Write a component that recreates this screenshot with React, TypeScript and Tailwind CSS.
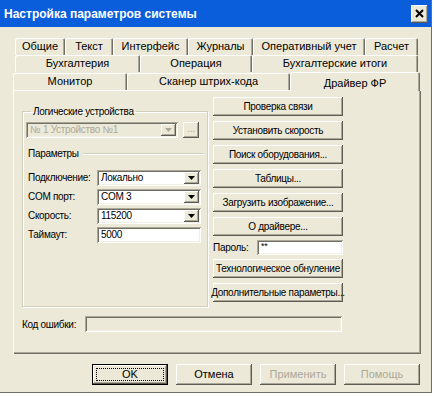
import React from 'react';

const raised =
  'shadow-[inset_-1px_-1px_0_#5e5c52,inset_1px_1px_0_#ffffff,inset_-2px_-2px_0_#aca899]';
const sunken =
  'shadow-[inset_1px_1px_0_#aca899,inset_-1px_-1px_0_#ffffff,inset_2px_2px_0_#716f64,inset_-2px_-2px_0_#f1efe2]';

// Small down arrow used in combo buttons
const Arrow: React.FC<{ disabled?: boolean }> = ({ disabled }) => (
  <svg width="7" height="4" viewBox="0 0 7 4">
    <path d="M0 0h7L3.5 4z" fill={disabled ? '#aca899' : '#000'} />
  </svg>
);

const Btn: React.FC<{ label: string; className?: string; disabled?: boolean }> = ({
  label,
  className = '',
  disabled,
}) => (
  <div
    className={`flex items-center justify-center whitespace-nowrap bg-[#ece9d8] ${raised} ${
      disabled ? 'text-[#aca899]' : 'text-black'
    } ${className}`}
  >
    {label}
  </div>
);

const Combo: React.FC<{ value: string; className?: string; disabled?: boolean }> = ({
  value,
  className = '',
  disabled,
}) => (
  <div
    className={`flex items-center ${sunken} ${
      disabled ? 'bg-[#ece9d8] text-[#aca899]' : 'bg-white text-black'
    } ${className}`}
  >
    <span className="flex-1 pl-[4px] leading-none truncate">{value}</span>
    <div className={`mr-[2px] w-[15px] h-[calc(100%-4px)] flex items-center justify-center bg-[#ece9d8] ${raised}`}>
      <Arrow disabled={disabled} />
    </div>
  </div>
);

const Field: React.FC<{ value?: string; className?: string; disabled?: boolean }> = ({
  value = '',
  className = '',
  disabled,
}) => (
  <div
    className={`flex items-center pl-[4px] ${sunken} ${
      disabled ? 'bg-[#ece9d8]' : 'bg-white'
    } ${className}`}
  >
    <span className="leading-none">{value}</span>
  </div>
);

type Tab = { label: string; w: number };

const row1: Tab[] = [
  { label: 'Общие', w: 50 },
  { label: 'Текст', w: 48 },
  { label: 'Интерфейс', w: 75 },
  { label: 'Журналы', w: 65 },
  { label: 'Оперативный учет', w: 112 },
  { label: 'Расчет', w: 53 },
];
const row2: Tab[] = [
  { label: 'Бухгалтерия', w: 125 },
  { label: 'Операция', w: 112 },
  { label: 'Бухгалтерские итоги', w: 166 },
];
const row3: Tab[] = [
  { label: 'Монитор', w: 114 },
  { label: 'Сканер штрих-кода', w: 163 },
];

const TabRow: React.FC<{ tabs: Tab[]; className?: string }> = ({ tabs, className = '' }) => (
  <div className={`flex h-[17px] ${className}`}>
    {tabs.map((t) => (
      <div
        key={t.label}
        style={{ width: t.w }}
        className="flex items-center justify-center whitespace-nowrap bg-[#ece9d8] rounded-t-[2px] shadow-[inset_1px_1px_0_#ffffff,inset_-1px_0_0_#716f64,inset_-2px_0_0_#aca899]"
      >
        {t.label}
      </div>
    ))}
  </div>
);

const rightButtons = [
  'Проверка связи',
  'Установить скорость',
  'Поиск оборудования...',
  'Таблицы...',
  'Загрузить изображение...',
  'О драйвере...',
];

export default function App() {
  return (
    <div className="w-[434px] h-[396px] bg-white font-['Liberation_Sans',Arial,sans-serif] text-[11px] text-black">
      <div className="w-[432px] h-[393px] bg-[#ece9d8] border-r border-b border-[#716f64] flex flex-col">
        {/* Title bar */}
        <div className="h-[27px] bg-[#0a5ddb] flex items-center justify-between pl-[4px] pr-[3px]">
          <span className="text-white font-bold text-[12px]">
            Настройка параметров системы
          </span>
          <div className={`w-[17px] h-[18px] bg-[#ece9d8] flex items-center justify-center ${raised}`}>
            <svg width="9" height="9" viewBox="0 0 9 9">
              <path d="M1 1l7 7M8 1L1 8" stroke="#000" strokeWidth="2" />
            </svg>
          </div>
        </div>

        {/* Tabs */}
        <div className="mt-[11px] pl-[15px]">
          <TabRow tabs={row1} />
          <TabRow tabs={row2} />
          <div className="flex items-end -ml-[2px]">
            <TabRow tabs={row3} />
            <div className="w-[130px] h-[19px] -mb-[1px] relative z-10 flex items-start justify-center pt-[3px] bg-[#ece9d8] rounded-t-[2px] shadow-[inset_1px_1px_0_#ffffff,inset_-1px_0_0_#716f64,inset_-2px_0_0_#aca899]">
              Драйвер ФР
            </div>
          </div>
        </div>

        {/* Panel */}
        <div className="ml-[13px] w-[408px] h-[264px] text-[10px] tracking-[-0.3px] whitespace-nowrap shadow-[inset_1px_1px_0_#ffffff,inset_-1px_-1px_0_#716f64,inset_-2px_-2px_0_#aca899] pl-[9px] pt-[7px]">
          <div className="flex gap-[5px]">
            <fieldset className="w-[186px] h-[202px] mt-[8px] border border-[#d0d0bf] shadow-[1px_1px_0_#ffffff,inset_1px_1px_0_#ffffff] px-[3px]">
              <legend className="ml-[5px] px-[2px] leading-[13px]">Логические устройства</legend>
              <div className="flex items-center gap-[5px] mt-[4px]">
                <Combo value="№ 1 Устройство №1" disabled className="w-[152px] h-[16px]" />
                <Btn label="..." className="w-[16px] h-[16px] pb-[3px] text-[#aca899]" disabled />
              </div>
              <div className="flex items-center gap-[4px] mt-[8px] pl-[2px]">
                <span>Параметры</span>
                <div className="flex-1 h-[2px] border-t border-[#d0d0bf] border-b-white border-b" />
              </div>
              <div className="mt-[8px] flex flex-col gap-[2px] pl-[2px]">
                {[
                  ['Подключение:', 'Локально'],
                  ['COM порт:', 'COM 3'],
                  ['Скорость:', '115200'],
                ].map(([l, v]) => (
                  <div key={l} className="flex items-center h-[17px]">
                    <span className="w-[69px]">{l}</span>
                    <Combo value={v} className="w-[104px] h-[16px]" />
                  </div>
                ))}
                <div className="flex items-center h-[17px]">
                  <span className="w-[69px]">Таймаут:</span>
                  <Field value="5000" className="w-[104px] h-[16px]" />
                </div>
              </div>
            </fieldset>

            <div className="w-[130px] flex flex-col gap-[5px]">
              {rightButtons.map((b) => (
                <Btn key={b} label={b} className="h-[19px]" />
              ))}
              <div className="flex items-center h-[14px] -my-[1px]">
                <span className="w-[44px]">Пароль:</span>
                <Field value="**" className="flex-1 h-[15px] items-start pt-[2px] text-[9px]" />
              </div>
              <Btn label="Технологическое обнуление" className="h-[19px] mt-[1px]" />
              <Btn label="Дополнительные параметры..." className="h-[19px]" />
            </div>
          </div>

          <div className="flex items-center mt-[9px]">
            <span className="w-[63px]">Код ошибки:</span>
            <Field disabled className="w-[257px] h-[16px]" />
          </div>
        </div>

        {/* Bottom buttons */}
        <div className="flex gap-[8px] pl-[92px] mt-[10px]">
          <div className="w-[76px] h-[21px] border border-black">
            <Btn label="OK" className="w-full h-full outline outline-1 outline-dotted outline-black -outline-offset-4" />
          </div>
          <Btn label="Отмена" className="w-[76px] h-[21px]" />
          <Btn label="Применить" disabled className="w-[76px] h-[21px]" />
          <Btn label="Помощь" disabled className="w-[76px] h-[21px]" />
        </div>
      </div>
    </div>
  );
}
